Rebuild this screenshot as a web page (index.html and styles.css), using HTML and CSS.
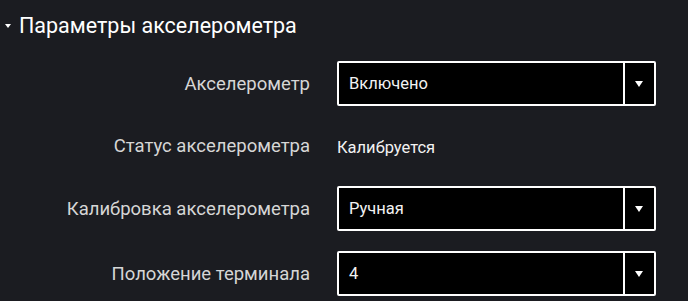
FILE: index.html
```html
<!DOCTYPE html>
<html lang="ru">
<head>
<meta charset="utf-8">
<title>Параметры акселерометра</title>
<link rel="stylesheet" href="styles.css">
</head>
<body>
<section class="panel">
  <h2 class="panel-title"><span class="caret"></span>Параметры акселерометра</h2>
  <div class="form">
    <div class="label">Акселерометр</div>
    <div class="select"><span class="select-value">Включено</span><span class="select-btn"><span class="tri"></span></span></div>

    <div class="label">Статус акселерометра</div>
    <div class="value">Калибруется</div>

    <div class="label">Калибровка акселерометра</div>
    <div class="select"><span class="select-value">Ручная</span><span class="select-btn"><span class="tri"></span></span></div>

    <div class="label">Положение терминала</div>
    <div class="select"><span class="select-value">4</span><span class="select-btn"><span class="tri"></span></span></div>
  </div>
</section>
</body>
</html>
```
FILE: styles.css
```css
html, body {
  margin: 0;
  padding: 0;
  background: #1b1c21;
  font-family: Roboto, "Liberation Sans", sans-serif;
  color: #ffffff;
  overflow: hidden;
}
.panel {
  width: 688px;
  height: 301px;
}
.panel-title {
  margin: 0;
  height: 50px;
  display: flex;
  align-items: center;
  padding-left: 5px;
  font-size: 21.5px;
  font-weight: 400;
  color: #ffffff;
}
.caret {
  width: 0;
  height: 0;
  border-left: 3px solid transparent;
  border-right: 3px solid transparent;
  border-top: 4px solid #ffffff;
  margin-right: 8px;
  margin-top: 2px;
}
.form {
  display: grid;
  grid-template-columns: 310px 319px;
  column-gap: 27px;
  row-gap: 20px;
  grid-template-rows: 45px 40px 45px 45px;
  margin-top: 11px;
  align-items: center;
}
.label {
  text-align: right;
  font-size: 18.5px;
  color: #d6d6d6;
}
.value {
  font-size: 16.5px;
  color: #f2f2f2;
  padding-top: 2px;
}
.select {
  box-sizing: border-box;
  height: 45px;
  border: 2px solid #ffffff;
  border-radius: 2px;
  background: #000000;
  display: flex;
  align-items: stretch;
}
.select-value {
  flex: 1;
  display: flex;
  align-items: center;
  padding-left: 10px;
  font-size: 16.5px;
  color: #f2f2f2;
}
.select-btn {
  width: 29px;
  border-left: 2px solid #ffffff;
  display: flex;
  align-items: center;
  justify-content: center;
}
.tri {
  width: 0;
  height: 0;
  border-left: 4px solid transparent;
  border-right: 4px solid transparent;
  border-top: 6px solid #ffffff;
  margin-right: 2px;
}
```
